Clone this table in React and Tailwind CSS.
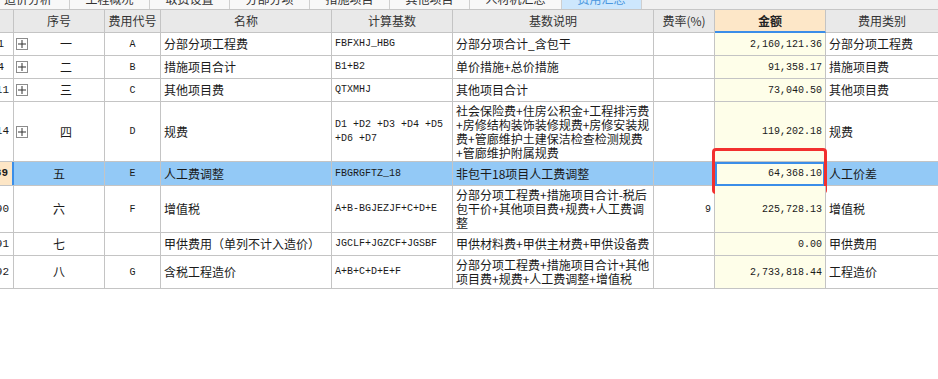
const GRID = 'grid grid-cols-[14px_91px_56px_171px_121px_201px_61px_111px_1fr]';

const tabs = [
  { label: '造价分析', w: 'w-[70px] justify-start pl-[4px]' },
  { label: '工程概况', w: 'w-[80px] justify-center' },
  { label: '取费设置', w: 'w-[80px] justify-center' },
  { label: '分部分项', w: 'w-[80px] justify-center' },
  { label: '措施项目', w: 'w-[80px] justify-center' },
  { label: '其他项目', w: 'w-[80px] justify-center' },
  { label: '人材机汇总', w: 'w-[92px] justify-center' },
];

const rows = [
  { n: '1', np: 'pr-[9px]', seq: '一', code: 'A', name: '分部分项工程费', base: ['FBFXHJ_HBG'], desc: ['分部分项合计_含包干'], rate: '', amt: '2,160,121.36', cat: '分部分项工程费', h: 'h-[23px]', plus: true },
  { n: '4', np: 'pr-[9px]', seq: '二', code: 'B', name: '措施项目合计', base: ['B1+B2'], desc: ['单价措施+总价措施'], rate: '', amt: '91,358.17', cat: '措施项目费', h: 'h-[23px]', plus: true },
  { n: '11', np: 'pr-[4px]', seq: '三', code: 'C', name: '其他项目费', base: ['QTXMHJ'], desc: ['其他项目合计'], rate: '', amt: '73,040.50', cat: '其他项目费', h: 'h-[23px]', plus: true },
  {
    n: '14', np: 'pr-[4px]', seq: '四', code: 'D', name: '规费', base: ['D1 +D2 +D3 +D4 +D5', '+D6 +D7'],
    desc: ['社会保险费+住房公积金+工程排污费', '+房修结构装饰装修规费+房修安装规', '费+管廊维护土建保洁检查检测规费', '+管廊维护附属规费'],
    rate: '', amt: '119,202.18', cat: '规费', h: 'h-[60px]', plus: true,
  },
  { n: '89', np: 'pr-[4px]', seq: '五', code: 'E', name: '人工费调整', base: ['FBGRGFTZ_18'], desc: ['非包干18项目人工费调整'], rate: '', amt: '64,368.10', cat: '人工价差', h: 'h-[24px]', sel: true },
  {
    n: '90', np: 'pr-[4px]', seq: '六', code: 'F', name: '增值税', base: ['A+B-BGJEZJF+C+D+E'],
    desc: ['分部分项工程费+措施项目合计-税后', '包干价+其他项目费+规费+人工费调', '整'],
    rate: '9', amt: '225,728.13', cat: '增值税', h: 'h-[47px]',
  },
  { n: '91', np: 'pr-[4px]', seq: '七', code: '', name: '甲供费用（单列不计入造价）', base: ['JGCLF+JGZCF+JGSBF'], desc: ['甲供材料费+甲供主材费+甲供设备费'], rate: '', amt: '0.00', cat: '甲供费用', h: 'h-[23px]' },
  {
    n: '92', np: 'pr-[4px]', seq: '八', code: 'G', name: '含税工程造价', base: ['A+B+C+D+E+F'],
    desc: ['分部分项工程费+措施项目合计+其他', '项目费+规费+人工费调整+增值税'],
    rate: '', amt: '2,733,818.44', cat: '工程造价', h: 'h-[33px]',
  },
];

const cell = 'border-r border-[#c4c4c4] flex items-center overflow-hidden whitespace-nowrap';
const mono = "font-['Liberation_Mono',monospace] text-[10px]";

function PlusBox() {
  return (
    <span className="ml-[2px] w-[12px] h-[12px] border border-[#8c8c8c] bg-white flex items-center justify-center shrink-0">
      <svg width="8" height="8" viewBox="0 0 8 8">
        <path d="M0 4H8M4 0V8" stroke="#333" strokeWidth="1" />
      </svg>
    </span>
  );
}

function Row({ r }) {
  const rowBg = r.sel ? 'bg-[#93c9f6]' : 'bg-white';
  return (
    <div className={`${GRID} ${r.h} border-b border-[#c4c4c4] ${rowBg}`}>
      <div
        className={`flex items-center justify-end overflow-hidden ${r.np} font-['Liberation_Mono',monospace] text-[11px] ${
          r.sel ? 'bg-[#fde6c6] border-r-2 border-[#3b8ee8] font-bold' : 'border-r border-[#c4c4c4]'
        }`}
      >
        {r.n}
      </div>
      <div className={cell}>
        {r.plus && <PlusBox />}
        <span className="flex-1 text-center">{r.seq}</span>
      </div>
      <div className={`${cell} justify-center ${mono}`}>{r.code}</div>
      <div className={`${cell} pl-[3px]`}>{r.name}</div>
      <div className={`${cell} pl-[3px] ${mono}`}>
        <div className="leading-[14px]">
          {r.base.map((l) => (
            <div key={l} className="whitespace-pre">{l}</div>
          ))}
        </div>
      </div>
      <div className={`${cell} pl-[3px]`}>
        <div className="leading-[14px]">
          {r.desc.map((l) => (
            <div key={l}>{l}</div>
          ))}
        </div>
      </div>
      <div className={`${cell} justify-end pr-[3px] ${mono}`}>{r.rate}</div>
      <div className={`border-r border-[#c4c4c4] flex items-center justify-end pr-[3px] relative bg-[#fefee9] ${mono}`}>
        {r.sel && (
          <>
            <span className="absolute left-0 right-0 top-0 -bottom-px border-2 border-[#3b8ee8]" />
            <span className="absolute -left-[3px] -top-[14px] w-[115px] h-[46px] border-[3px] border-[#f2302e] rounded-[4px]" />
          </>
        )}
        <span className="relative">{r.amt}</span>
      </div>
      <div className="flex items-center pl-[3px] overflow-hidden whitespace-nowrap">{r.cat}</div>
    </div>
  );
}

export default function App() {
  return (
    <div className="w-[938px] h-[379px] bg-white overflow-hidden text-[12px] text-[#1a1a1a] font-['Noto_Sans_CJK_SC',sans-serif]">
      {/* tab strip, labels cut at the top */}
      <div className="h-[10px] flex bg-[#f0f0f0] border-b border-[#c6c6c6]">
        {tabs.map((t) => (
          <div key={t.label} className={`${t.w} h-full flex items-end overflow-hidden bg-[#f8f8f8] border-r border-[#cfcfcf] text-[#333]`}>
            <span className="leading-[12px] mb-[4px]">{t.label}</span>
          </div>
        ))}
        <div className="w-[80px] h-full flex items-end justify-center overflow-hidden bg-[#cde7fd] border-r border-[#cfcfcf] text-[#4a97e0]">
          <span className="leading-[12px] mb-[4px]">费用汇总</span>
        </div>
      </div>

      {/* header */}
      <div className={`${GRID} h-[23px] bg-[#e9e9e9] text-[#333]`}>
        <div className="border-r border-b border-[#c4c4c4]" />
        <div className="border-r border-b border-[#c4c4c4] flex items-center justify-center">序号</div>
        <div className="border-r border-b border-[#c4c4c4] flex items-center justify-center">费用代号</div>
        <div className="border-r border-b border-[#c4c4c4] flex items-center justify-center">名称</div>
        <div className="border-r border-b border-[#c4c4c4] flex items-center justify-center">计算基数</div>
        <div className="border-r border-b border-[#c4c4c4] flex items-center justify-center">基数说明</div>
        <div className="border-r border-b border-[#c4c4c4] flex items-center justify-center">费率(%)</div>
        <div className="border-r border-[#c4c4c4] border-b-2 border-b-[#3b8ee8] bg-[#fde7c8] flex items-center justify-center font-bold text-[#222]">金额</div>
        <div className="border-b border-[#c4c4c4] flex items-center justify-center">费用类别</div>
      </div>

      {rows.map((r) => (
        <Row key={r.seq} r={r} />
      ))}
    </div>
  );
}
